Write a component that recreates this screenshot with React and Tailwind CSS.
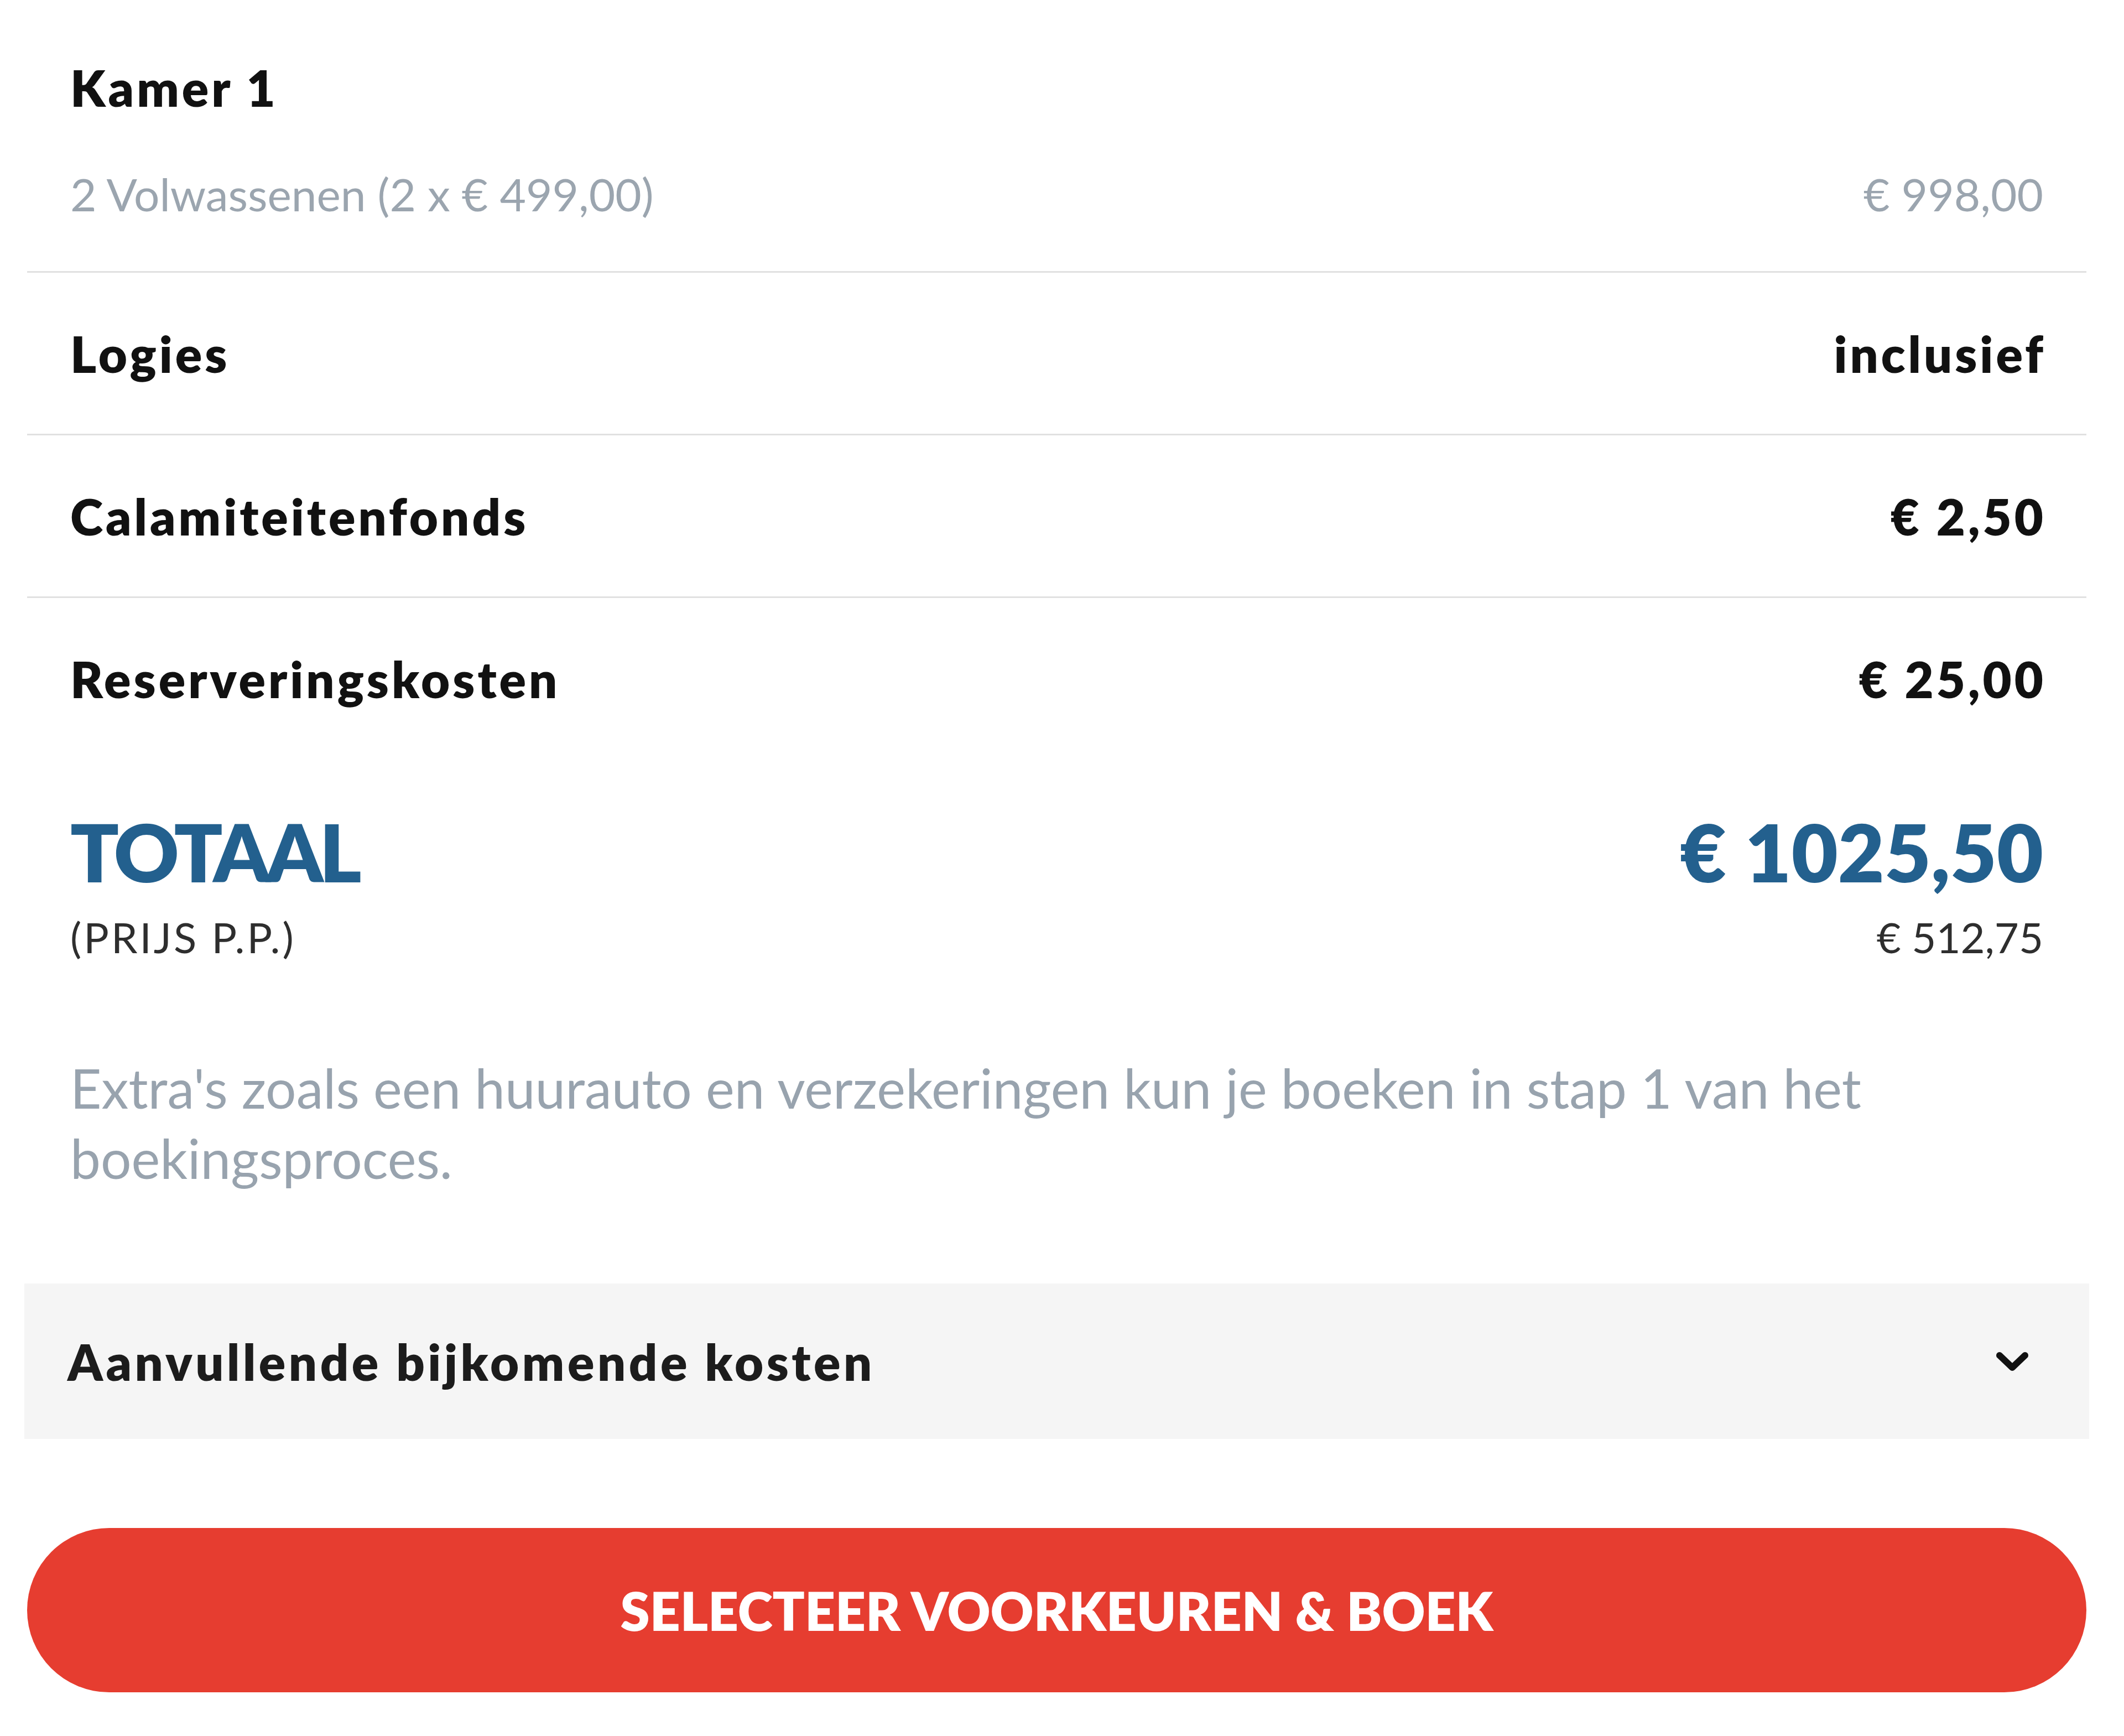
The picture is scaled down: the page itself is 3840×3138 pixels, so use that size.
import React from "react";

const font = { fontFamily: '"Lato", "Open Sans", sans-serif' };

function Row({ label, value }) {
  return (
    <div className="flex h-[294px] items-center justify-between border-t-[3px] border-[#e1e1e1] px-[78px]">
      <span className="text-[90px] font-extrabold leading-[1.2] tracking-[5px] text-[#111111]">{label}</span>
      <span className="-mr-[5px] text-[90px] font-extrabold leading-[1.2] tracking-[5px] text-[#111111]">{value}</span>
    </div>
  );
}

export default function App() {
  return (
    <div className="min-h-[3138px] w-[3840px] bg-white" style={font}>
      <div className="ml-[49px] w-[3723px]">
        <div className="px-[78px] pt-[104px] pb-[91px]">
          <div className="text-[90px] font-extrabold leading-[108px] tracking-[5px] text-[#111111]">Kamer 1</div>
          <div className="mt-[89px] flex justify-between text-[82px] leading-[98px] text-[#9ba5af]">
            <span>2 Volwassenen (2 x € 499,00)</span>
            <span>€ 998,00</span>
          </div>
        </div>
        <Row label="Logies" value="inclusief" />
        <Row label="Calamiteitenfonds" value="€ 2,50" />
        <Row label="Reserveringskosten" value="€ 25,00" />

        <div className="mt-[80px] flex justify-between px-[78px]">
          <div className="flex flex-col">
            <span className="text-[145px] font-extrabold leading-[174px] tracking-[-7px] text-[#23608e]">TOTAAL</span>
            <span className="mt-[24px] text-[76px] leading-[88px] tracking-[4px] text-[#2e2e2e]">(PRIJS P.P.)</span>
          </div>
          <div className="flex flex-col items-end">
            <span className="text-[145px] font-extrabold leading-[174px] text-[#23608e]">€ 1025,50</span>
            <span className="mt-[24px] text-[76px] leading-[88px] text-[#2e2e2e]">€ 512,75</span>
          </div>
        </div>

        <p className="mt-[165px] px-[78px] pr-[300px] text-[98px] leading-[127px] text-[#98a3ae]">
          Extra's zoals een huurauto en verzekeringen kun je boeken in stap 1 van het boekingsproces.
        </p>

        <div className="-mx-[5px] mt-[163px] flex h-[281px] items-center justify-between bg-[#f5f5f5] pl-[78px] pr-[109px]">
          <span className="text-[90px] font-extrabold leading-[1.2] tracking-[5.5px] text-[#1c1c1c]">Aanvullende bijkomende kosten</span>
          <svg width="60" height="36" viewBox="0 0 60 36" fill="none">
            <path d="M7 7 L30 29 L53 7" stroke="#111" strokeWidth="12" strokeLinecap="round" strokeLinejoin="round" />
          </svg>
        </div>

        <button className="mt-[161px] flex h-[297px] w-full items-center justify-center rounded-full bg-[#e63d30] text-[96px] font-extrabold uppercase leading-none text-white">
          Selecteer voorkeuren &amp; boek
        </button>
      </div>
    </div>
  );
}
